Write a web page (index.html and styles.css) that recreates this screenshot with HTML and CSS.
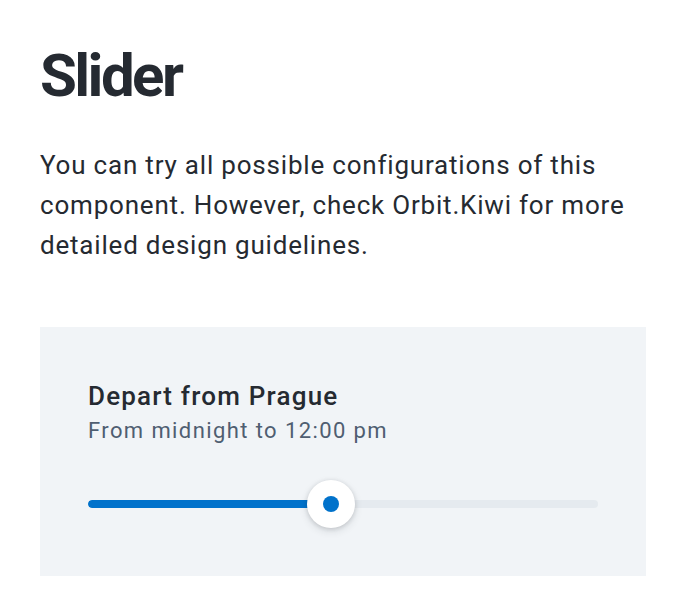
FILE: index.html
```html
<!DOCTYPE html>
<html lang="en">
<head>
<meta charset="utf-8">
<link rel="stylesheet" href="styles.css">
</head>
<body>
<main class="page">
  <h1 class="title">Slider</h1>
  <p class="intro">You can try all possible configurations of this component. However, check Orbit.Kiwi for more detailed design guidelines.</p>
  <section class="panel">
    <div class="label">Depart from Prague</div>
    <div class="help">From midnight to 12:00 pm</div>
    <div class="slider">
      <div class="track">
        <div class="fill" style="width: 47.7%"></div>
      </div>
      <div class="thumb" style="left: 47.7%"><span class="dot"></span></div>
    </div>
  </section>
</main>
</body>
</html>
```
FILE: styles.css
```css
html, body {
  margin: 0;
  padding: 0;
  background: #ffffff;
}
body {
  font-family: Roboto, "Liberation Sans", sans-serif;
  color: #252a31;
}
.page {
  padding: 0 40px;
}
.title {
  margin: 0;
  padding-top: 40px;
  font-size: 60px;
  line-height: 72px;
  font-weight: 700;
  letter-spacing: -2.6px;
}
.intro {
  margin: 33px 0 0;
  font-size: 26px;
  line-height: 40px;
  font-weight: 400;
  letter-spacing: 0.8px;
}
.panel {
  margin-top: 62px;
  background: #f1f4f7;
  padding: 51px 48px 48px;
}
.label {
  font-size: 26px;
  line-height: 36px;
  font-weight: 500;
  letter-spacing: 1.2px;
}
.help {
  font-size: 22px;
  line-height: 34px;
  color: #4f5e71;
  letter-spacing: 1.4px;
}
.slider {
  position: relative;
  margin-top: 32px;
  height: 48px;
  display: flex;
  align-items: center;
}
.track {
  width: 100%;
  height: 8px;
  border-radius: 4px;
  background: #e5eaef;
  overflow: hidden;
}
.fill {
  height: 100%;
  background: #0172cb;
  border-radius: 4px;
}
.thumb {
  position: absolute;
  top: 0;
  width: 48px;
  height: 48px;
  margin-left: -24px;
  border-radius: 50%;
  background: #ffffff;
  box-shadow: 0 1px 4px rgba(37, 42, 49, 0.16), 0 3px 8px rgba(37, 42, 49, 0.12);
  display: flex;
  align-items: center;
  justify-content: center;
}
.dot {
  width: 16px;
  height: 16px;
  border-radius: 50%;
  background: #0172cb;
}
```
